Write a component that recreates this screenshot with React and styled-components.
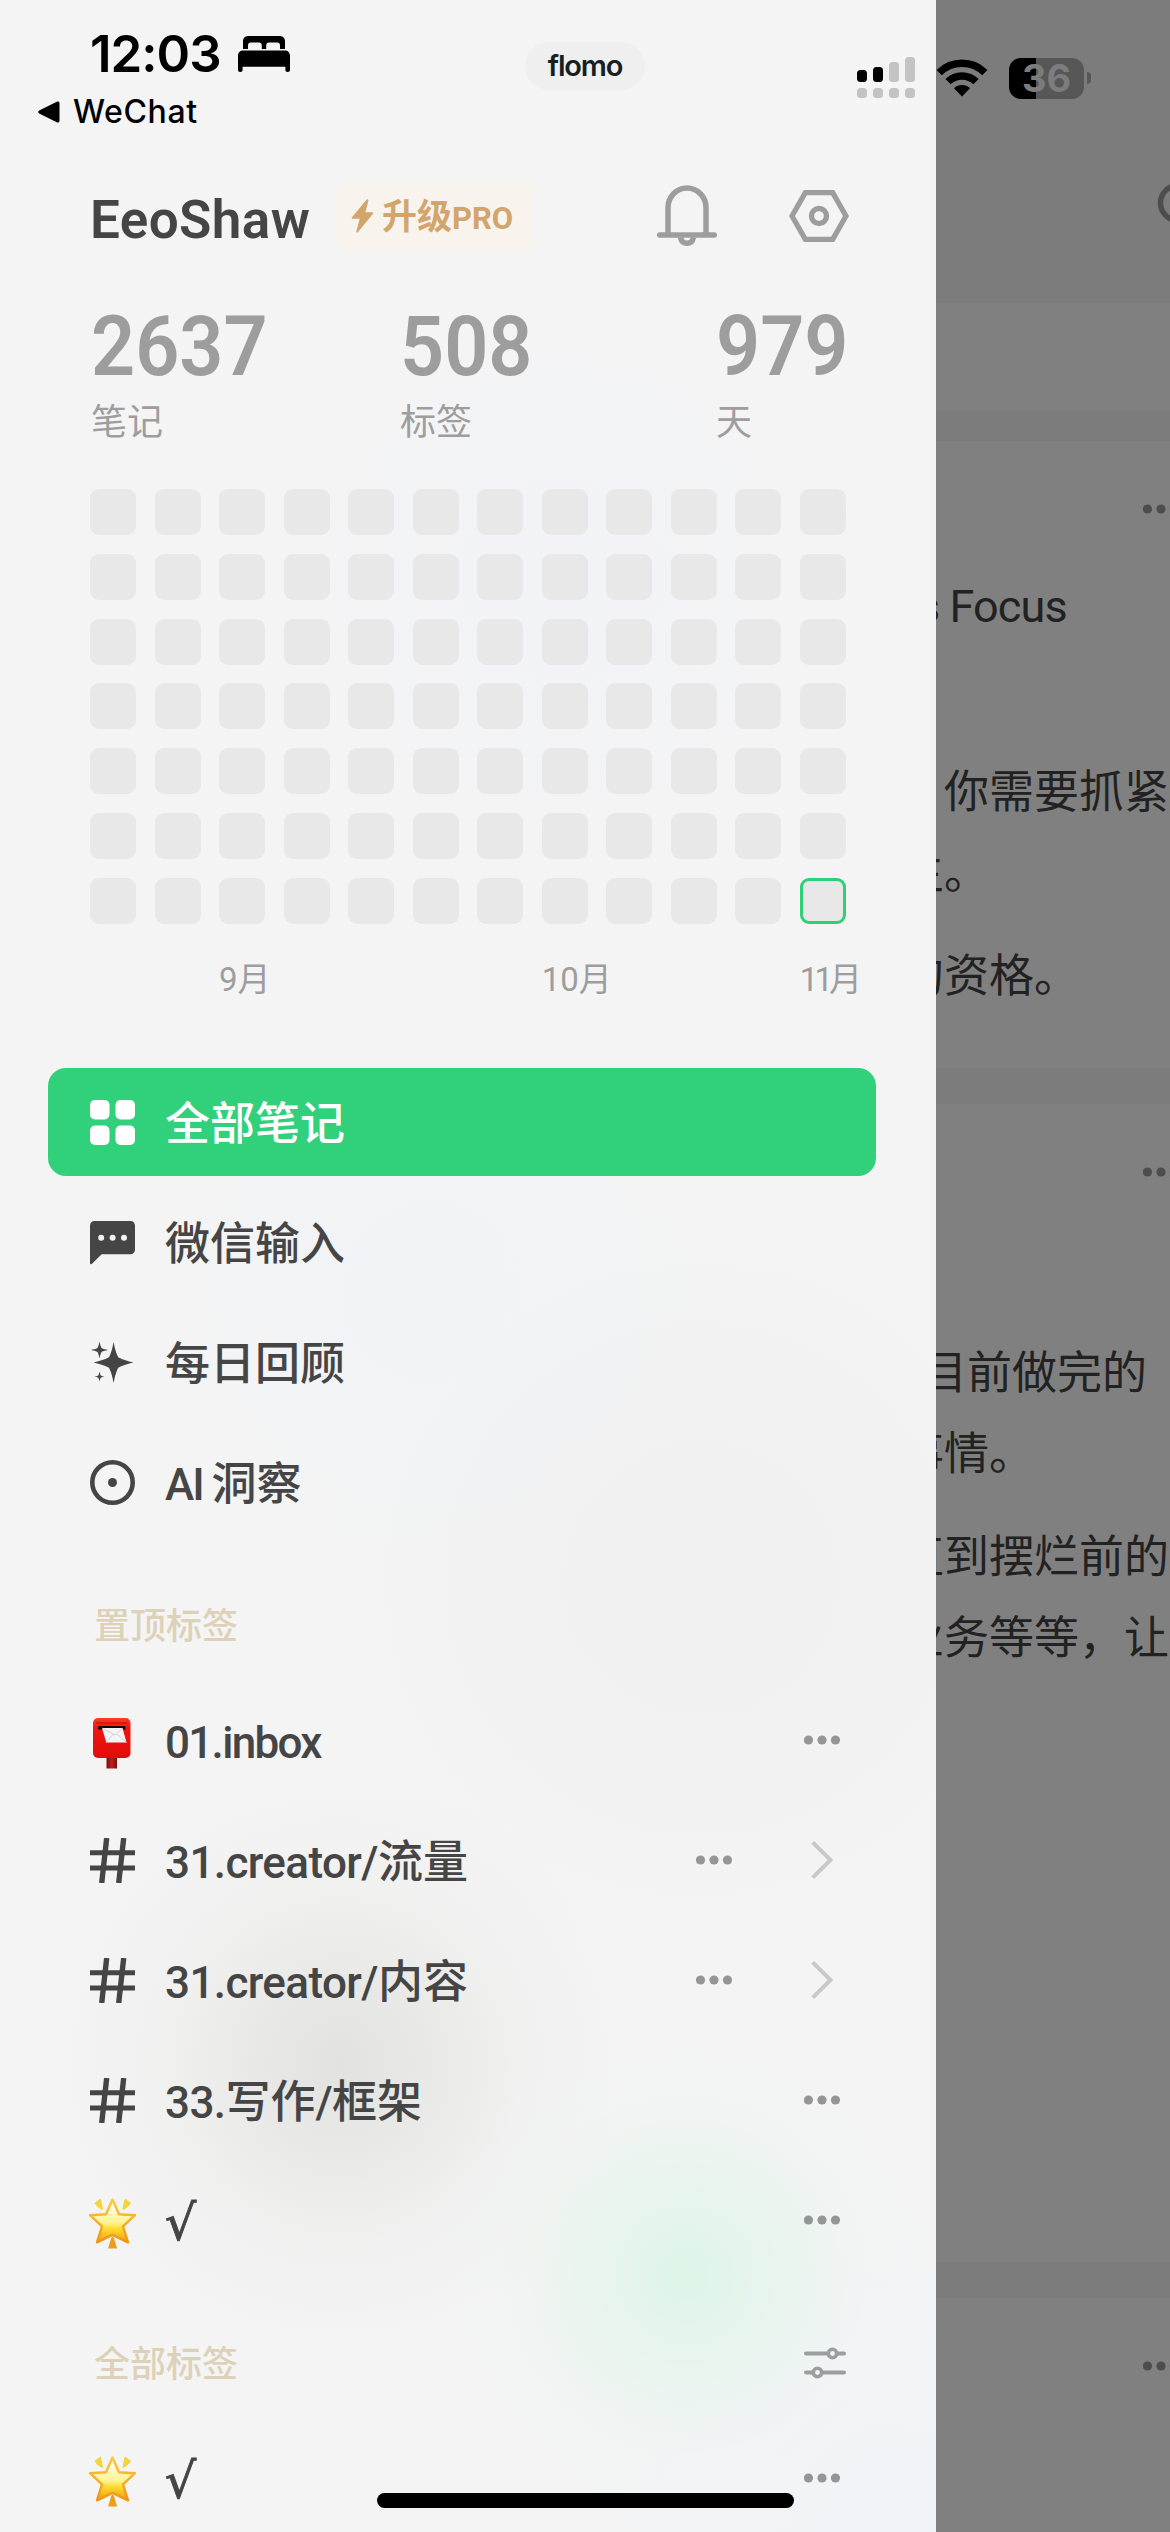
import React from 'react';
import styled, { createGlobalStyle } from 'styled-components';

const WEEKS = 12;
const DAYS = 7;

const months = [
  { label: '9月', column: 3 },
  { label: '10月', column: 8 },
  { label: '11月', column: 12, tight: true },
];

const stats = [
  { value: '2637', label: '笔记' },
  { value: '508', label: '标签' },
  { value: '979', label: '天' },
];

const pinnedTags = [
  { icon: 'mailbox', name: '01.inbox', tracking: -1.7 },
  { icon: 'hash', name: '31.creator/流量', tracking: -0.6, nested: true },
  { icon: 'hash', name: '31.creator/内容', tracking: -0.6, nested: true },
  { icon: 'hash', name: '33.写作/框架', tracking: -0.6 },
  { icon: 'star', name: '√', symbol: true },
];

const allTags = [{ icon: 'star', name: '√', symbol: true }];

// ---------- icons ----------

const BedIcon = () => (
  <svg width="52" height="36" viewBox="0 0 52 36">
    <path d="M5 13V5.500C5 2.200 7 0 10.500 0h31C45 0 47 2.200 47 5.500V13h-5V9.500C42 7.500 41 6.500 39 6.500h-8c-1.800 0-2.800 1-2.800 3V13h-4.400V9.500c0-2-1-3-2.800-3h-8c-2 0-3 1-3 3V13z" />
    <path d="M0 20c0-3.500 2-5.500 5.500-5.500h41c3.500 0 5.500 2 5.500 5.500v14c0 1.200-.8 2-2.300 2s-2.300-.8-2.300-2v-3.300H4.600V34c0 1.200-.8 2-2.300 2S0 35.200 0 34z" />
  </svg>
);

const BackIcon = () => (
  <svg width="22" height="22" viewBox="0 0 22 22">
    <path d="M1.200 9.600L18.800.8c1.600-.8 2.700 0 2.700 1.500v17.400c0 1.500-1.100 2.300-2.700 1.500L1.200 12.400c-1.400-.8-1.400-2 0-2.800z" />
  </svg>
);

const SignalIcon = () => (
  <svg width="58" height="42" viewBox="0 0 58 42">
    <rect x="0" y="13" width="10" height="12" rx="3.500" />
    <rect x="16" y="10" width="10" height="15" rx="3.500" />
    <g fill="#c3c3c3">
      <rect x="32" y="5" width="10" height="20" rx="3.500" />
      <rect x="48" y="0" width="10" height="25" rx="3.500" />
      <rect x="0" y="31" width="10" height="10" rx="3.500" />
      <rect x="16" y="31" width="10" height="10" rx="3.500" />
      <rect x="32" y="31" width="10" height="10" rx="3.500" />
      <rect x="48" y="31" width="10" height="10" rx="3.500" />
    </g>
  </svg>
);

const WifiIcon = () => (
  <svg width="52" height="38" viewBox="0 0 52 38">
    <g fill="none" stroke="#000" strokeWidth="7.500">
      <path d="M3.200 13.600a32.500 32.500 0 0 1 45.600 0" />
      <path d="M12 22.600a20 20 0 0 1 28 0" />
    </g>
    <path d="M26 37.500l-8-8.200a11.500 11.500 0 0 1 16 0z" />
  </svg>
);

const BoltIcon = () => (
  <svg width="23" height="34" viewBox="0 0 23 34">
    <path
      d="M15.500.8L1 18.200c-.6.800-.3 1.600.7 1.600h7L5.400 32c-.4 1.500.8 2 1.700.9L21.800 15c.7-.9.300-1.700-.7-1.700h-6.600L17.300 2c.4-1.500-.8-2.200-1.800-1.200z"
      fill="#d2a56d"
    />
  </svg>
);

const BellIcon = () => (
  <svg width="60" height="62" viewBox="0 0 60 62" fill="none" stroke="#9d9d9d">
    <path d="M11 50V22.500a19 19.500 0 0 1 38 0V50" strokeWidth="5.500" />
    <path d="M2.700 50h54.600" strokeWidth="5.500" strokeLinecap="round" />
    <path d="M23.500 52.500c.8 4 3.200 5.800 6.500 5.800s5.700-1.800 6.500-5.800" strokeWidth="5.500" />
  </svg>
);

const SettingIcon = () => (
  <svg width="60" height="54" viewBox="0 0 60 54" fill="none" stroke="#9d9d9d" strokeWidth="5.300">
    <path d="M16.300 3.700h27.400L57 27 43.700 50.300H16.300L3 27z" />
    <circle cx="30" cy="27" r="7.500" />
  </svg>
);

const SearchIcon = () => (
  <svg width="46" height="46" viewBox="0 0 46 46" fill="none" stroke="#4d4d4d" strokeWidth="5.500">
    <circle cx="21" cy="21" r="17.500" />
    <path d="M34 34l10 10" />
  </svg>
);

const GridIcon = () => (
  <svg width="45" height="45" viewBox="0 0 45 45" fill="#fff">
    <rect x="0" y="0" width="19.500" height="19.500" rx="5" />
    <rect x="25.500" y="0" width="19.500" height="19.500" rx="5" />
    <rect x="0" y="25.500" width="19.500" height="19.500" rx="5" />
    <rect x="25.500" y="25.500" width="19.500" height="19.500" rx="5" />
  </svg>
);

const ChatIcon = () => (
  <svg width="45" height="45" viewBox="0 0 45 45">
    <path d="M4.500 1h36C43 1 45 3 45 5.500v24.200c0 2.500-2 4.500-4.500 4.500H11.700L2 43.700c-1 .9-2 .5-2-.8V5.500C0 3 2 1 4.500 1z" fill="#454545" />
    <g fill="#f3f3f3">
      <circle cx="11.200" cy="17.700" r="3" />
      <circle cx="22.600" cy="17.700" r="3" />
      <circle cx="34" cy="17.700" r="3" />
    </g>
  </svg>
);

const SparkleIcon = () => (
  <svg width="45" height="45" viewBox="0 0 45 45" fill="#454545">
    <path d="M23.600 2c1.100 5.500 2 10.300 4.600 15.300 4.500 2.500 9.800 3.900 15.300 5.200-5.500 1.300-10.800 2.700-15.300 5.200-2.600 5-3.500 9.800-4.600 15.300-1.100-5.500-2-10.300-4.600-15.300-4.800-2.500-9.900-3.900-15.600-5.200 5.700-1.300 10.800-2.700 15.600-5.200 2.600-5 3.500-9.800 4.600-15.300z" />
    <path d="M9.500 1.500c.5 2.500 1 4.600 2 6.500 2 1 4 1.500 6.500 2-2.500.5-4.500 1-6.500 2-1 1.900-1.500 4-2 6.500-.5-2.500-1-4.600-2-6.500-2-1-4-1.500-6.500-2 2.500-.5 4.500-1 6.500-2 1-1.900 1.500-4 2-6.500z" />
    <path d="M9.500 31.500c.3 1.500.6 2.700 1.200 3.900 1.200.6 2.400.9 3.900 1.200-1.500.3-2.700.6-3.900 1.200-.6 1.200-.9 2.400-1.200 3.900-.3-1.500-.6-2.700-1.200-3.900-1.200-.6-2.400-.9-3.900-1.200 1.500-.3 2.700-.6 3.900-1.200.6-1.200.9-2.400 1.200-3.900z" />
  </svg>
);

const InsightIcon = () => (
  <svg width="45" height="45" viewBox="0 0 45 45">
    <circle cx="22.500" cy="22.500" r="20.200" fill="none" stroke="#454545" strokeWidth="4.600" />
    <circle cx="22.500" cy="22.500" r="4.500" fill="#454545" />
  </svg>
);

const HashIcon = () => (
  <svg width="45" height="45" viewBox="0 0 45 45" fill="none" stroke="#454545">
    <path d="M0 14.700h45M0 30h45" strokeWidth="5" />
    <path d="M16.700 0L11.700 45M33.700 0l-5 45" strokeWidth="5.400" />
  </svg>
);

const MailboxIcon = () => (
  <svg width="45" height="52" viewBox="0 0 45 52">
    <defs>
      <linearGradient id="box" x1="0" y1="0" x2="0" y2="1">
        <stop offset="0" stopColor="#ff3b2c" />
        <stop offset=".25" stopColor="#f01511" />
        <stop offset="1" stopColor="#e00c0c" />
      </linearGradient>
      <linearGradient id="pole">
        <stop offset="0" stopColor="#7d0c0c" />
        <stop offset=".5" stopColor="#c21d1d" />
        <stop offset="1" stopColor="#7d0c0c" />
      </linearGradient>
    </defs>
    <rect x="16.500" y="36" width="10.500" height="15.500" fill="url(#pole)" />
    <rect x="3" y="1" width="37.500" height="40" rx="5" fill="url(#box)" />
    <path d="M6 6h31.500" stroke="#b80c0c" strokeWidth="1" />
    <rect x="8" y="9" width="27.500" height="3.500" rx="1" fill="#190303" />
    <path d="M12 11h20.500l4 14.500H16.300z" fill="#f4f4f4" />
    <path d="M12 11l13.500 7 7-7M16.300 25.500l7-8.500m13.200 8.500L27 17" fill="none" stroke="#cfcfcf" strokeWidth=".9" />
  </svg>
);

const StarIcon = () => (
  <svg width="50" height="52" viewBox="0 0 50 52">
    <defs>
      <linearGradient id="star" x1="0" y1="0" x2="0" y2="1">
        <stop offset="0" stopColor="#ffeeb0" />
        <stop offset=".15" stopColor="#fffde8" />
        <stop offset=".55" stopColor="#fff38e" />
        <stop offset=".68" stopColor="#ffdc2e" />
        <stop offset="1" stopColor="#f09a12" />
      </linearGradient>
      <linearGradient id="edge" x1="0" y1="0" x2="0" y2="1">
        <stop offset="0" stopColor="#ffc83d" />
        <stop offset="1" stopColor="#ef9513" />
      </linearGradient>
    </defs>
    <path
      d="M24.500 2.500l6.500 14.800 16 .9-12 11.200 5 15.900-15.500-7.500L9 45.300l5-15.900L2 18.200l16-.9z"
      fill="url(#star)"
      stroke="url(#edge)"
      strokeWidth="2.400"
      strokeLinejoin="round"
    />
    <path d="M6.500 6l4.800-3.800c.9-.6 1.700-.2 1.900.7l2 10.200c-4-1.400-6.500-3.500-8.700-7.100zM43 6l-4.800-3.800c-.9-.6-1.700-.2-1.900.7l-2 10.200c4-1.400 6.500-3.500 8.700-7.100z" fill="#f3d53b" />
    <path d="M24.700 40c.8 0 1.200.7 1.400 1.500l3 10h-9l3-10c.3-.8.700-1.500 1.600-1.500z" fill="#ec9d1c" />
  </svg>
);

const MoreIcon = ({ color = '#959595' }) => (
  <svg width="42" height="12" viewBox="0 0 42 12" fill={color}>
    <circle cx="4.500" cy="6" r="4.600" />
    <circle cx="18" cy="6" r="4.600" />
    <circle cx="31.500" cy="6" r="4.600" />
  </svg>
);

const ChevronIcon = () => (
  <svg width="42" height="40" viewBox="0 0 42 40" fill="none" stroke="#c8c8c8" strokeWidth="4">
    <path d="M8.700 2.300L26.500 20 8.700 37.700" />
  </svg>
);

const FilterIcon = () => (
  <svg width="42" height="32" viewBox="0 0 42 32" fill="none" stroke="#9d9d9d" strokeWidth="4">
    <path d="M2 6.500h22M33 6.500h7M2 25.500h7M18 25.500h22" strokeLinecap="round" />
    <circle cx="28.500" cy="6.500" r="4.200" strokeWidth="3.600" />
    <circle cx="13.500" cy="25.500" r="4.200" strokeWidth="3.600" />
  </svg>
);

const tagIcons = {
  mailbox: <MailboxIcon />,
  hash: <HashIcon />,
  star: <StarIcon />,
};

const menus = [
  { icon: <GridIcon />, name: '全部笔记', active: true },
  { icon: <ChatIcon />, name: '微信输入' },
  { icon: <SparkleIcon />, name: '每日回顾' },
  { icon: <InsightIcon />, name: 'AI 洞察', tracking: -2 },
];

// ---------- parts ----------

const StatusBar = () => (
  <StatusHeader>
    <ClockDiv>
      <TimeP>12:03</TimeP>
      <BedIcon />
    </ClockDiv>
    <BackDiv>
      <BackIcon />
      <BackP>WeChat</BackP>
    </BackDiv>
    <IslandDiv>flomo</IslandDiv>
    <SystemDiv>
      <SignalIcon />
      <WifiIcon />
      <BatteryDiv>
        <LevelDiv>36</LevelDiv>
        <TipDiv />
      </BatteryDiv>
    </SystemDiv>
  </StatusHeader>
);

// latin runs are tracked tighter than the chinese ones
const RowText = ({ text, tracking }) => (
  <RowP>
    {text
      .split(/([\x20-\x7e]+)/)
      .filter(Boolean)
      .map((part, i) =>
        /^[\x20-\x7e]/.test(part) ? (
          <LatinSpan key={i} $tracking={tracking}>
            {part}
          </LatinSpan>
        ) : (
          part
        )
      )}
  </RowP>
);

const TagList = ({ tags }) => (
  <div>
    {tags.map((tag) => (
      <TagRow key={tag.name}>
        <IconDiv $emoji={tag.icon !== 'hash'}>{tagIcons[tag.icon]}</IconDiv>
        {tag.symbol ? <SymbolP>{tag.name}</SymbolP> : <RowText text={tag.name} tracking={tag.tracking} />}
        <ActionDiv>
          <MoreIcon />
          {tag.nested && <ChevronIcon />}
        </ActionDiv>
      </TagRow>
    ))}
  </div>
);

const Drawer = () => (
  <DrawerAside>
    <ProfileDiv>
      <NameP>EeoShaw</NameP>
      <ProButton>
        <BoltIcon />
        <ProSpan>
          升级<small>PRO</small>
        </ProSpan>
      </ProButton>
      <ToolDiv>
        <BellIcon />
        <SettingIcon />
      </ToolDiv>
    </ProfileDiv>
    <StatsDiv>
      {stats.map((stat) => (
        <div key={stat.label}>
          <StatP>{stat.value}</StatP>
          <StatLabelP>{stat.label}</StatLabelP>
        </div>
      ))}
    </StatsDiv>
    <HeatmapDiv>
      {Array.from({ length: WEEKS * DAYS }, (_, i) => (
        <CellDiv key={i} $today={i === WEEKS * DAYS - 1} />
      ))}
    </HeatmapDiv>
    <MonthDiv>
      {months.map((month) => (
        <MonthP key={month.label} $column={month.column} $tight={month.tight}>
          {month.label}
        </MonthP>
      ))}
    </MonthDiv>
    <MenuNav>
      {menus.map((menu) => (
        <MenuItem key={menu.name} $active={menu.active}>
          <IconDiv>{menu.icon}</IconDiv>
          <RowText text={menu.name} tracking={menu.tracking} />
        </MenuItem>
      ))}
    </MenuNav>
    <SectionDiv>
      <SectionP>置顶标签</SectionP>
    </SectionDiv>
    <TagList tags={pinnedTags} />
    <SectionDiv>
      <SectionP>全部标签</SectionP>
      <FilterIcon />
    </SectionDiv>
    <TagList tags={allTags} />
  </DrawerAside>
);

// the memo list is pushed to the right and dimmed while the drawer is open
const Feed = () => (
  <FeedMain>
    <FeedHeader>
      <SearchIcon />
    </FeedHeader>
    <InputCard />
    <MemoCard $height={627} $gap={30}>
      <MemoMore>
        <MoreIcon color="#4d4d4d" />
      </MemoMore>
      <MemoP $top={51} $shift={-19} $tracking={-0.9}>
        s Focus
      </MemoP>
      <MemoP $top={105}>，你需要抓紧</MemoP>
      <MemoP>生。</MemoP>
      <MemoP $top={22}>的资格。</MemoP>
    </MemoCard>
    <MemoCard $height={1158} $gap={36}>
      <MemoMore>
        <MoreIcon color="#4d4d4d" />
      </MemoMore>
      <MemoP $top={155} $shift={-14}>
        目前做完的
      </MemoP>
      <MemoP>事情。</MemoP>
      <MemoP $top={22}>直到摆烂前的</MemoP>
      <MemoP>业务等等，让</MemoP>
    </MemoCard>
    <MemoCard $height={234} $gap={36}>
      <MemoMore>
        <MoreIcon color="#4d4d4d" />
      </MemoMore>
    </MemoCard>
  </FeedMain>
);

const App = () => {
  return (
    <>
      <GlobalStyle />
      <ScreenDiv>
        <Drawer />
        <Feed />
        <StatusBar />
        <HomeBar />
      </ScreenDiv>
    </>
  );
};

export default App;

// ---------- styles ----------

const GlobalStyle = createGlobalStyle`
  * {
    box-sizing: border-box;
    margin: 0;
    padding: 0;
  }

  body {
    background: #7c7c7c;
    font-family: Roboto, 'Noto Sans CJK SC', sans-serif;
  }

  svg {
    display: block;
    flex-shrink: 0;
  }
`;

const ScreenDiv = styled.div`
  position: relative;
  width: 1170px;
  height: 2532px;
  display: flex;
  overflow: hidden;
`;

const DrawerAside = styled.aside`
  width: 936px;
  height: 100%;
  padding-top: 180px;
  flex-shrink: 0;
  overflow: hidden;
  color: #454545;
  background:
    radial-gradient(circle at 686px 2275px, rgba(219, 245, 230, 0.9), rgba(226, 245, 235, 0.65) 90px, rgba(238, 244, 241, 0.25) 180px, rgba(244, 244, 244, 0) 260px),
    radial-gradient(circle at 340px 2065px, rgba(225, 225, 223, 0.95), rgba(229, 229, 227, 0.75) 90px, rgba(236, 236, 235, 0.4) 180px, rgba(244, 244, 244, 0) 290px),
    radial-gradient(circle at 900px 2532px, #f1f3f9, rgba(241, 243, 249, 0) 330px),
    radial-gradient(circle at 430px 1290px, #f1f3f7, rgba(241, 243, 247, 0) 280px),
    radial-gradient(circle at 560px 580px, #f2f3f7, rgba(242, 243, 247, 0) 320px),
    radial-gradient(circle at 700px 1580px, #f0f0f0, rgba(240, 240, 240, 0) 380px),
    #f4f4f4;
`;

const ProfileDiv = styled.div`
  height: 72px;
  padding: 0 87px 0 90px;
  display: flex;
  align-items: center;
`;

const NameP = styled.p`
  width: 246px;
  padding-top: 7px;
  font-size: 53px;
  font-weight: 600;
  letter-spacing: 0.4px;
  line-height: 66px;
`;

const ProButton = styled.button`
  width: 198px;
  height: 72px;
  padding-left: 15px;
  display: flex;
  align-items: center;
  gap: 8px;
  border: none;
  border-radius: 14px;
  background: #f8f3ed;
  font-family: inherit;
`;

const ProSpan = styled.span`
  padding-top: 4px;
  color: #d2a56d;
  font-size: 35px;
  font-weight: 600;
  line-height: 40px;
  white-space: nowrap;

  & > small {
    font-size: 31px;
    font-weight: 700;
  }
`;

const ToolDiv = styled.div`
  margin-left: auto;
  display: flex;
  align-items: center;
  gap: 72px;
`;

const StatsDiv = styled.div`
  margin-top: 65px;
  padding-left: 91px;
  display: grid;
  grid-template-columns: 309px 316px auto;
  color: #9d9d9d;
`;

const StatP = styled.p`
  height: 60px;
  font-size: 84px;
  font-weight: 600;
  line-height: 60px;
  transform: scaleX(0.92);
  transform-origin: left;
`;

const StatLabelP = styled.p`
  height: 36px;
  margin-top: 28px;
  font-size: 36px;
  line-height: 36px;
`;

const HeatmapDiv = styled.div`
  width: 756px;
  height: 435px;
  margin: 48px 0 0 90px;
  display: grid;
  grid-template-columns: repeat(12, 46px);
  grid-template-rows: repeat(7, 46px);
  justify-content: space-between;
  align-content: space-between;
`;

const CellDiv = styled.div`
  border: ${({ $today }) => ($today ? '3px solid #31cf79' : 'none')};
  border-radius: 9px;
  background-color: #e8e8e8;
`;

const MonthDiv = styled.div`
  width: 756px;
  height: 36px;
  margin: 38px 0 0 90px;
  display: grid;
  grid-template-columns: repeat(12, 46px);
  justify-content: space-between;
`;

const MonthP = styled.p`
  grid-column: ${({ $column }) => $column};
  grid-row: 1;
  color: #9d9d9d;
  font-size: 33px;
  line-height: 36px;
  letter-spacing: ${({ $tight }) => ($tight ? '-4px' : '0')};
  white-space: nowrap;
`;

const MenuNav = styled.nav`
  margin: 70px 60px 0 48px;
  display: flex;
  flex-direction: column;
  gap: 12px;
`;

const MenuItem = styled.div`
  height: 108px;
  padding-left: 42px;
  display: flex;
  align-items: center;
  gap: 30px;
  border-radius: 18px;
  color: ${({ $active }) => ($active ? '#fff' : '#454545')};
  background-color: ${({ $active }) => ($active ? '#31d17b' : 'transparent')};
`;

const IconDiv = styled.div`
  width: 45px;
  padding-top: ${({ $emoji }) => ($emoji ? '6px' : '0')};
  display: flex;
  justify-content: center;
`;

const RowP = styled.p`
  padding-top: 6px;
  font-size: 45px;
  font-weight: 500;
  line-height: 60px;
  white-space: pre;
`;

const LatinSpan = styled.span`
  font-size: 44px;
  letter-spacing: ${({ $tracking }) => $tracking || 0}px;
`;

const SymbolP = styled.p`
  padding-top: 7px;
  font-family: 'DejaVu Sans', sans-serif;
  font-size: 49px;
  line-height: 60px;
  -webkit-text-stroke: 1px #454545;
`;

const SectionDiv = styled.div`
  height: 36px;
  margin: 71px 90px 43px 94px;
  display: flex;
  align-items: center;
  justify-content: space-between;
`;

const SectionP = styled.p`
  padding-top: 4px;
  color: #ddd1b9;
  font-size: 36px;
  font-weight: 500;
  line-height: 36px;
`;

const TagRow = styled.div`
  height: 108px;
  margin: 0 60px 12px 48px;
  padding: 0 30px 0 42px;
  display: flex;
  align-items: center;
  gap: 30px;

  &:last-child {
    margin-bottom: 0;
  }
`;

const ActionDiv = styled.div`
  margin-left: auto;
  display: flex;
  align-items: center;
  gap: 66px;
`;

const FeedMain = styled.main`
  width: 234px;
  height: 100%;
  overflow: hidden;
  background-color: #7c7c7c;
`;

const FeedHeader = styled.div`
  height: 303px;
  padding: 182px 0 0 221px;
`;

const InputCard = styled.div`
  height: 108px;
  background-color: #808080;
`;

const MemoCard = styled.section`
  height: ${({ $height }) => $height}px;
  margin-top: ${({ $gap }) => $gap}px;
  padding-top: 62px;
  overflow: hidden;
  background-color: #808080;
`;

const MemoMore = styled.div`
  padding-left: 207px;
`;

const MemoP = styled.p`
  margin-top: ${({ $top }) => $top || 0}px;
  margin-left: ${({ $shift }) => $shift || -37}px;
  color: #222;
  font-size: 45px;
  letter-spacing: ${({ $tracking }) => $tracking || 0}px;
  line-height: 81px;
  white-space: pre;
`;

const StatusHeader = styled.header`
  position: absolute;
  top: 0;
  left: 0;
  width: 100%;
  height: 140px;
  padding: 30px 79px 0 38px;
  display: grid;
  grid-template-columns: 487px 120px 1fr;
  grid-template-rows: 48px 44px;
  font-family: Inter, 'Liberation Sans', sans-serif;
`;

const ClockDiv = styled.div`
  grid-area: 1 / 1;
  padding-left: 52px;
  display: flex;
  align-items: center;
  gap: 16px;
`;

const TimeP = styled.p`
  width: 132px;
  font-size: 51px;
  font-weight: 600;
  line-height: 48px;
  letter-spacing: -1px;
`;

const BackDiv = styled.div`
  grid-area: 2 / 1;
  padding-top: 23px;
  display: flex;
  align-items: center;
  gap: 13px;
`;

const BackP = styled.p`
  font-size: 32px;
  font-weight: 500;
  letter-spacing: 0.6px;
  line-height: 22px;
`;

const IslandDiv = styled.div`
  grid-area: 1 / 2 / 3 / 3;
  height: 48px;
  margin-top: 12px;
  border-radius: 24px;
  background-color: #efefef;
  color: #171f24;
  font-size: 29px;
  font-weight: 600;
  letter-spacing: -1.2px;
  line-height: 48px;
  text-align: center;
`;

const SystemDiv = styled.div`
  grid-area: 1 / 3 / 3 / 4;
  height: 42px;
  margin-top: 27px;
  display: flex;
  align-items: center;
  justify-content: flex-end;
  gap: 21px;
`;

const BatteryDiv = styled.div`
  display: flex;
  align-items: center;
  gap: 3px;
`;

const LevelDiv = styled.div`
  width: 75px;
  height: 41px;
  border-radius: 12px;
  background: linear-gradient(to right, #000 27px, #575757 27px);
  color: #7c7c7c;
  font-size: 38px;
  font-weight: 700;
  line-height: 41px;
  text-align: center;
`;

const TipDiv = styled.div`
  width: 4px;
  height: 12px;
  border-radius: 0 6px 6px 0;
  background-color: #575757;
`;

const HomeBar = styled.div`
  position: absolute;
  left: 377px;
  bottom: 24px;
  width: 417px;
  height: 15px;
  border-radius: 8px;
  background-color: #000;
`;
